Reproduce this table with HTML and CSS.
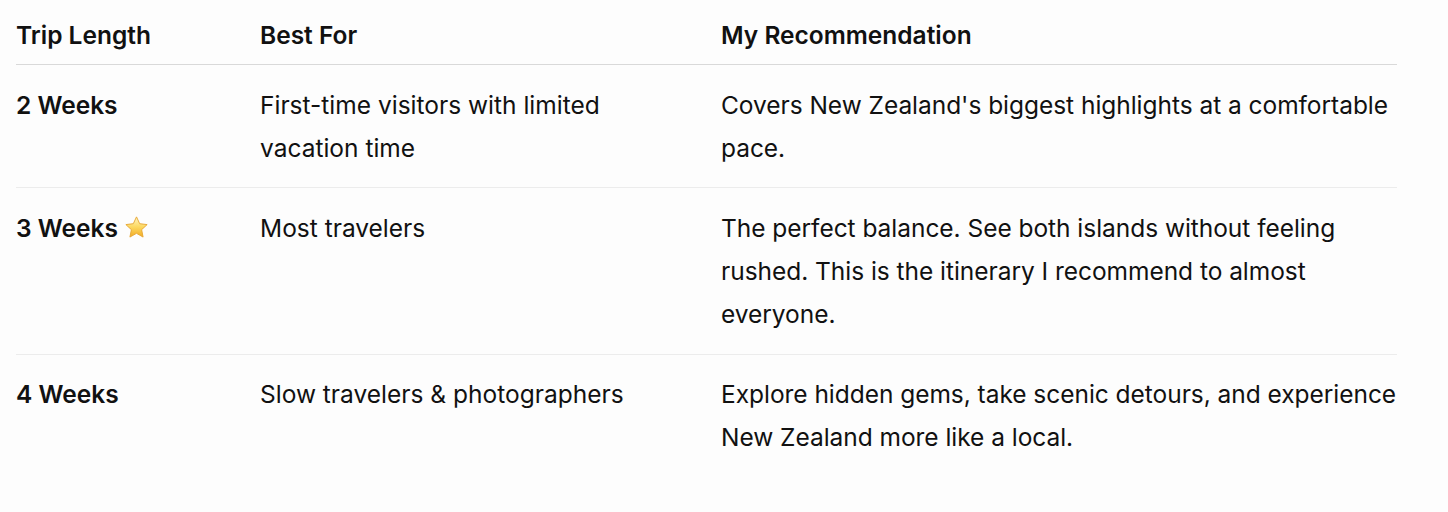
FILE: index.html
```html
<!DOCTYPE html>
<html lang="en">
<head>
<meta charset="utf-8">
<title>Trip Length</title>
<link rel="stylesheet" href="styles.css">
</head>
<body>
<div class="page">
<table class="trips">
<colgroup><col class="c1"><col class="c2"><col class="c3"></colgroup>
<thead>
<tr><th>Trip Length</th><th>Best For</th><th>My Recommendation</th></tr>
</thead>
<tbody>
<tr><td class="len">2 Weeks</td><td>First-time visitors with limited vacation time</td><td>Covers New Zealand's biggest highlights at a comfortable pace.</td></tr>
<tr><td class="len">3 Weeks <svg class="star" viewBox="0 0 24 24" width="25" height="25" aria-hidden="true"><defs><linearGradient id="sg" x1="0" y1="0" x2="0" y2="1"><stop offset="0" stop-color="#fff6c4"/><stop offset="0.5" stop-color="#fcd860"/><stop offset="1" stop-color="#f2ab24"/></linearGradient></defs><path d="M12 1.8l3.05 6.55 7.15.85-5.28 4.9 1.4 7.08L12 17.6l-6.32 3.58 1.4-7.08L1.8 9.2l7.15-.85z" fill="url(#sg)" stroke="#e6a632" stroke-width="0.9" stroke-linejoin="round"/></svg></td><td>Most travelers</td><td>The perfect balance. See both islands without feeling rushed. This is the itinerary I recommend to almost everyone.</td></tr>
<tr><td class="len">4 Weeks</td><td>Slow travelers &amp; photographers</td><td>Explore hidden gems, take scenic detours, and experience New Zealand more like a local.</td></tr>
</tbody>
</table>
</div>
</body>
</html>
```
FILE: styles.css
```css
html, body {
  margin: 0;
  background: #fdfdfd;
}
body {
  font-family: Inter, "Noto Sans", sans-serif;
  color: #111111;
  font-size: 24.5px;
  line-height: 43px;
}
.page {
  padding: 0 16px;
}
.trips {
  width: 1381px;
  border-collapse: collapse;
  table-layout: fixed;
}
.c1 { width: 244px; }
.c2 { width: 461px; }
.c3 { width: 676px; }
.trips th {
  text-align: left;
  font-weight: 600;
  padding: 14px 24px 7px 0;
  border-bottom: 1px solid #d9d9d9;
  vertical-align: top;
}
.trips td {
  padding: 18.6px 24px 17.8px 0;
  vertical-align: top;
  border-bottom: 1px solid #ececec;
}
.trips th:last-child,
.trips td:last-child {
  padding-right: 0;
}
.trips td:last-child {
  letter-spacing: -0.04px;
}
.trips tbody tr:last-child td {
  border-bottom: none;
}
.trips td.len {
  font-weight: 600;
}
.star {
  vertical-align: -3px;
}
```
